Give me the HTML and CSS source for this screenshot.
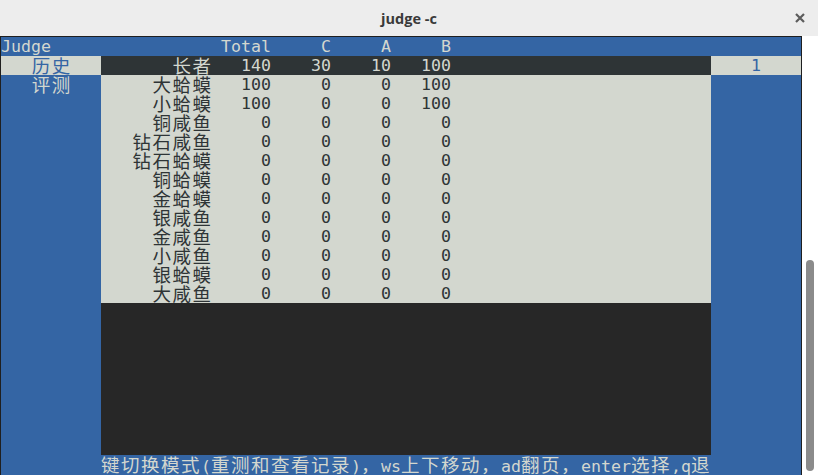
FILE: index.html
```html
<!DOCTYPE html>
<html lang="zh">
<head>
<meta charset="utf-8">
<title>judge -c</title>
<link rel="stylesheet" href="styles.css">
</head>
<body>
<div class="window">
  <header class="titlebar">
    <span class="title">judge -c</span>
    <svg class="close" width="12" height="12" viewBox="0 0 12 12"><path d="M2 2L10 10M10 2L2 10" stroke="#5c5c5c" stroke-width="2.2" stroke-linecap="butt"/></svg>
  </header>
  <div class="body">
    <div class="term">
      <div class="line head">
        <div class="side-head">Judge</div>
        <div class="cols"><span></span><span>Total</span><span>C</span><span>A</span><span>B</span></div>
      </div>
      <div class="line">
        <div class="side sel"><span class="zh">历史</span></div>
        <div class="mid cur cols"><span class="zh">长者</span><span>140</span><span>30</span><span>10</span><span>100</span></div>
        <div class="rside sel">1</div>
      </div>
      <div class="line">
        <div class="side"><span class="zh">评测</span></div>
        <div class="mid cols"><span class="zh">大蛤蟆</span><span>100</span><span>0</span><span>0</span><span>100</span></div>
        <div class="rside"></div>
      </div>
      <div class="line">
        <div class="side"></div>
        <div class="mid cols"><span class="zh">小蛤蟆</span><span>100</span><span>0</span><span>0</span><span>100</span></div>
        <div class="rside"></div>
      </div>
      <div class="line">
        <div class="side"></div>
        <div class="mid cols"><span class="zh">铜咸鱼</span><span>0</span><span>0</span><span>0</span><span>0</span></div>
        <div class="rside"></div>
      </div>
      <div class="line">
        <div class="side"></div>
        <div class="mid cols"><span class="zh">钻石咸鱼</span><span>0</span><span>0</span><span>0</span><span>0</span></div>
        <div class="rside"></div>
      </div>
      <div class="line">
        <div class="side"></div>
        <div class="mid cols"><span class="zh">钻石蛤蟆</span><span>0</span><span>0</span><span>0</span><span>0</span></div>
        <div class="rside"></div>
      </div>
      <div class="line">
        <div class="side"></div>
        <div class="mid cols"><span class="zh">铜蛤蟆</span><span>0</span><span>0</span><span>0</span><span>0</span></div>
        <div class="rside"></div>
      </div>
      <div class="line">
        <div class="side"></div>
        <div class="mid cols"><span class="zh">金蛤蟆</span><span>0</span><span>0</span><span>0</span><span>0</span></div>
        <div class="rside"></div>
      </div>
      <div class="line">
        <div class="side"></div>
        <div class="mid cols"><span class="zh">银咸鱼</span><span>0</span><span>0</span><span>0</span><span>0</span></div>
        <div class="rside"></div>
      </div>
      <div class="line">
        <div class="side"></div>
        <div class="mid cols"><span class="zh">金咸鱼</span><span>0</span><span>0</span><span>0</span><span>0</span></div>
        <div class="rside"></div>
      </div>
      <div class="line">
        <div class="side"></div>
        <div class="mid cols"><span class="zh">小咸鱼</span><span>0</span><span>0</span><span>0</span><span>0</span></div>
        <div class="rside"></div>
      </div>
      <div class="line">
        <div class="side"></div>
        <div class="mid cols"><span class="zh">银蛤蟆</span><span>0</span><span>0</span><span>0</span><span>0</span></div>
        <div class="rside"></div>
      </div>
      <div class="line">
        <div class="side"></div>
        <div class="mid cols"><span class="zh">大咸鱼</span><span>0</span><span>0</span><span>0</span><span>0</span></div>
        <div class="rside"></div>
      </div>
      <div class="line blank">
        <div class="side"></div>
        <div class="mid empty"></div>
        <div class="rside"></div>
      </div>
      <div class="status"><span class="zh">键切换模式</span>(<span class="zh">重测和查看记录</span>)<span class="zh">，</span>ws<span class="zh">上下移动，</span>ad<span class="zh">翻页，</span>enter<span class="zh">选择</span>,q<span class="zh">退</span></div>
    </div>
    <div class="gutter"><div class="thumb"></div></div>
  </div>
</div>
</body>
</html>
```

FILE: styles.css
```css
html, body {
  margin: 0;
  padding: 0;
  background: #ffffff;
}

.window {
  width: 818px;
  height: 475px;
  display: flex;
  flex-direction: column;
  overflow: hidden;
}

.titlebar {
  height: 36px;
  flex: none;
  background: #ededed;
  display: flex;
  align-items: center;
  justify-content: center;
  position: relative;
}

.title {
  font-family: "Open Sans", "DejaVu Sans", sans-serif;
  font-weight: 700;
  font-size: 14.5px;
  color: #3a3a3a;
}

.close {
  position: absolute;
  right: 12px;
  top: 12px;
}

.body {
  flex: 1;
  display: flex;
  min-height: 0;
}

.term {
  width: 800px;
  flex: none;
  border: 1px solid #1f1f1f;
  border-bottom: none;
  background: #3465a4;
  font-family: "DejaVu Sans Mono", monospace;
  font-size: 16.6px;
  color: #d3d7cf;
  display: flex;
  flex-direction: column;
  white-space: pre;
}

.line {
  height: 19px;
  line-height: 19px;
  display: flex;
}

.zh {
  font-family: "Noto Sans CJK SC", sans-serif;
  font-size: 18.5px;
  letter-spacing: 1.5px;
  line-height: 19px;
}

.head .side-head {
  width: 100px;
  flex: none;
}

.cols {
  display: grid;
  grid-template-columns: 110px 60px 60px 60px 60px;
  width: 610px;
  flex: none;
}

.cols > span {
  text-align: right;
}

.cols .zh {
  margin-right: -1.5px;
}

.side {
  width: 100px;
  flex: none;
  text-align: center;
}

.side .zh {
  margin-right: -1.5px;
}

.side.sel,
.rside.sel {
  background: #d3d7cf;
  color: #3465a4;
}

.rside {
  width: 90px;
  flex: none;
  text-align: center;
}

.mid {
  background: #d3d7cf;
  color: #2e3436;
}

.mid.cur {
  background: #2e3436;
  color: #d3d7cf;
}

.line.blank {
  height: 152px;
}

.mid.empty {
  width: 610px;
  flex: none;
  background: #272727;
}

.status {
  height: 19px;
  line-height: 19px;
  padding-left: 100px;
}

.gutter {
  flex: 1;
  background: #ffffff;
  position: relative;
}

.thumb {
  position: absolute;
  left: 4px;
  top: 224px;
  width: 8px;
  height: 211px;
  border-radius: 4px;
  background: #8b8b8b;
}
```
